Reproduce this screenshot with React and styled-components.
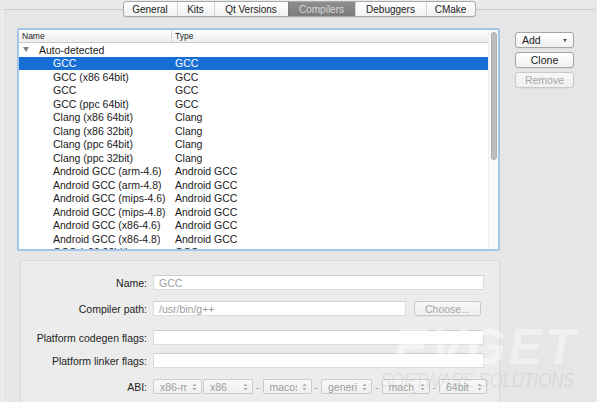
import React from "react";
import styled, { createGlobalStyle, css } from "styled-components";

const GlobalStyle = createGlobalStyle`
  html, body {
    margin: 0;
    padding: 0;
    background: #e9e9e9;
  }
  body {
    font-family: "Liberation Sans", Arial, sans-serif;
    font-size: 10.5px;
    color: #222;
  }
`;

const Window = styled.div`
  position: relative;
  width: 597px;
  height: 402px;
  overflow: hidden;
  background: #e9e9e9;
`;

const TabStrip = styled.div`
  position: relative;
  z-index: 2;
  display: flex;
  justify-content: center;
  padding-top: 1px;
  padding-left: 1px;
`;

const Tabs = styled.div`
  display: flex;
  height: 14px;
  border: 1px solid #a9a9a9;
  border-radius: 3px;
  background: linear-gradient(#ffffff, #f1f1f1);
  overflow: hidden;
  box-shadow: 0 1px 0 rgba(0, 0, 0, 0.06);
`;

const Tab = styled.div`
  display: flex;
  align-items: center;
  justify-content: center;
  width: ${(p) => p.$w}px;
  font-size: 10px;
  color: #1c1c1c;
  border-left: 1px solid #d2d2d2;
  &:first-child {
    border-left: none;
  }
  ${(p) =>
    p.$active &&
    css`
      background: linear-gradient(#8d8d8d, #7c7c7c);
      color: #d8d8d8;
      border-left-color: #7a7a7a;
    `}
`;

const Pane = styled.div`
  margin: -8px 2px 0 2px;
  height: 400px;
  border-top: 1px solid #cdcdcd;
  border-left: 1px solid #f3f3f3;
  background: #e6e6e6;
  padding: 18px 0 0 14px;
  box-sizing: border-box;
`;

const Content = styled.div`
  display: flex;
  gap: 15px;
`;

const LeftColumn = styled.div`
  display: flex;
  flex-direction: column;
  width: 483px;
`;

const ListFrame = styled.div`
  display: flex;
  height: 223px;
  border: 2px solid #a6c4ea;
  border-radius: 2px;
  background: #fff;
  box-sizing: border-box;
  overflow: hidden;
`;

const Table = styled.div`
  flex: 1;
  display: flex;
  flex-direction: column;
  overflow: hidden;
`;

const HeaderRow = styled.div`
  display: flex;
  height: 13px;
  flex-shrink: 0;
  background: linear-gradient(#ffffff, #ededed);
  border-bottom: 1px solid #c9c9c9;
  box-sizing: border-box;
`;

const HeadCell = styled.div`
  display: flex;
  align-items: center;
  width: ${(p) => (p.$w ? `${p.$w}px` : "auto")};
  flex: ${(p) => (p.$w ? "none" : 1)};
  padding-left: 3px;
  font-size: 8.5px;
  color: #222;
  box-sizing: border-box;
  & + & {
    border-left: 1px solid #d0d0d0;
  }
`;

const Row = styled.div`
  display: flex;
  height: 13.5px;
  flex-shrink: 0;
  align-items: center;
  color: ${(p) => (p.$selected ? "#fff" : "#1a1a1a")};
  background: ${(p) => (p.$selected ? "#176fd5" : "transparent")};
`;

const NameCell = styled.div`
  width: 152px;
  display: flex;
  align-items: center;
  padding-left: ${(p) => p.$indent}px;
  box-sizing: border-box;
  white-space: nowrap;
`;

const TypeCell = styled.div`
  padding-left: 4px;
  white-space: nowrap;
`;

const Arrow = styled.span`
  display: inline-block;
  width: 0;
  height: 0;
  border-left: 3px solid transparent;
  border-right: 3px solid transparent;
  border-top: 5px solid #808080;
  margin-right: 10px;
`;

const Scrollbar = styled.div`
  width: 10px;
  flex-shrink: 0;
  background: #fafafa;
  border-left: 1px solid #eeeeee;
  padding: 2px 0 0 2px;
  box-sizing: border-box;
`;

const Thumb = styled.div`
  width: 6px;
  height: 128px;
  border-radius: 3px;
  background: #bdbdbd;
  border: 1px solid #adadad;
  box-sizing: border-box;
`;

const DetailsBox = styled.div`
  margin: 9px 0 0 3px;
  width: 480px;
  height: 150px;
  background: #ececec;
  border: 1px solid #d8d8d8;
  border-radius: 3px;
  box-sizing: border-box;
  padding: 14px 15px 0 0;
`;

const FormRow = styled.div`
  display: flex;
  align-items: center;
  margin-top: ${(p) => p.$top || 0}px;
  height: 15px;
`;

const Label = styled.div`
  width: 126px;
  flex-shrink: 0;
  text-align: right;
  color: #1e1e1e;
  margin-right: 6px;
  white-space: nowrap;
`;

const TextField = styled.div`
  width: ${(p) => (p.$w ? `${p.$w}px` : "auto")};
  flex: ${(p) => (p.$w ? "none" : 1)};
  height: 15px;
  background: #fff;
  border: 1px solid #dcdcdc;
  border-top-color: #cfcfcf;
  box-sizing: border-box;
  padding-left: 5px;
  display: flex;
  align-items: center;
  color: #9d9d9d;
`;

const PlainButton = styled.div`
  display: flex;
  align-items: center;
  justify-content: ${(p) => (p.$left ? "space-between" : "center")};
  height: ${(p) => p.$h || 16}px;
  width: ${(p) => (p.$w ? `${p.$w}px` : "auto")};
  padding: 0 6px;
  box-sizing: border-box;
  border: 1px solid ${(p) => (p.$disabled ? "#c9c9c9" : "#a4a4a4")};
  border-radius: 3px;
  background: ${(p) =>
    p.$disabled ? "linear-gradient(#f7f7f7, #efefef)" : "linear-gradient(#ffffff, #f0f0f0)"};
  color: ${(p) => (p.$disabled ? "#a6a6a6" : "#1c1c1c")};
  margin-left: ${(p) => p.$ml || 0}px;
  box-shadow: 0 1px 0 rgba(0, 0, 0, 0.04);
`;

const ButtonColumn = styled.div`
  display: flex;
  flex-direction: column;
  gap: 4px;
  width: 59px;
  padding-top: 4px;
`;

const DropCaret = styled.span`
  width: 0;
  height: 0;
  border-left: 2.5px solid transparent;
  border-right: 2.5px solid transparent;
  border-top: 3.5px solid #555;
`;

const AbiRow = styled.div`
  display: flex;
  align-items: center;
  gap: 1px;
`;

const Combo = styled.div`
  position: relative;
  display: flex;
  align-items: center;
  width: ${(p) => p.$w}px;
  height: 15px;
  box-sizing: border-box;
  border: 1px solid #cbcbcb;
  border-radius: 2px;
  background: linear-gradient(#f8f8f8, #efefef);
  color: #9e9e9e;
  padding: 0 14px 0 6px;
`;

const ComboText = styled.span`
  overflow: hidden;
  white-space: nowrap;
  display: block;
  width: 100%;
`;

const ComboArrows = styled.svg`
  position: absolute;
  right: 4px;
  top: 3px;
`;

const Dash = styled.span`
  color: #9e9e9e;
  padding: 0 2px;
`;

const Watermark = styled.div`
  position: absolute;
  left: 394px;
  top: 322px;
  pointer-events: none;
  z-index: 5;
`;

const WatermarkBig = styled.div`
  font-family: "Liberation Sans", Arial, sans-serif;
  font-weight: 900;
  font-style: italic;
  font-size: 50px;
  line-height: 50px;
  letter-spacing: 3px;
  color: rgba(255, 255, 255, 0.42);
`;

const WatermarkSmall = styled.div`
  margin-top: -4px;
  margin-left: -14px;
  font-style: italic;
  font-size: 21px;
  letter-spacing: -0.5px;
  transform: scaleX(0.82);
  transform-origin: left;
  color: rgba(140, 140, 140, 0.16);
  white-space: nowrap;
`;

const tabs = [
  ["General", 53],
  ["Kits", 36],
  ["Qt Versions", 73],
  ["Compilers", 66],
  ["Debuggers", 70],
  ["CMake", 48],
];

const compilers = [
  ["GCC", "GCC"],
  ["GCC (x86 64bit)", "GCC"],
  ["GCC", "GCC"],
  ["GCC (ppc 64bit)", "GCC"],
  ["Clang (x86 64bit)", "Clang"],
  ["Clang (x86 32bit)", "Clang"],
  ["Clang (ppc 64bit)", "Clang"],
  ["Clang (ppc 32bit)", "Clang"],
  ["Android GCC (arm-4.6)", "Android GCC"],
  ["Android GCC (arm-4.8)", "Android GCC"],
  ["Android GCC (mips-4.6)", "Android GCC"],
  ["Android GCC (mips-4.8)", "Android GCC"],
  ["Android GCC (x86-4.6)", "Android GCC"],
  ["Android GCC (x86-4.8)", "Android GCC"],
  ["GCC (x86 32bit)", "GCC"],
];

const abi = [
  ["x86-macos-generic-mach_o-64bit", 49],
  ["x86", 50],
  ["macos", 49],
  ["generic", 51],
  ["mach_o", 48],
  ["64bit", 48],
];

const UpDown = () => (
  <ComboArrows width="5" height="8" viewBox="0 0 5 8">
    <path d="M0.5 3 L2.5 0.8 L4.5 3 Z" fill="#a8a8a8" />
    <path d="M0.5 5 L2.5 7.2 L4.5 5 Z" fill="#a8a8a8" />
  </ComboArrows>
);

const App = () => {
  return (
    <Window>
      <GlobalStyle />
      <TabStrip>
        <Tabs>
          {tabs.map(([t, w]) => (
            <Tab key={t} $w={w} $active={t === "Compilers"}>
              {t}
            </Tab>
          ))}
        </Tabs>
      </TabStrip>
      <Pane>
        <Content>
          <LeftColumn>
            <ListFrame>
              <Table>
                <HeaderRow>
                  <HeadCell $w={152}>Name</HeadCell>
                  <HeadCell>Type</HeadCell>
                </HeaderRow>
                <Row>
                  <NameCell $indent={4}>
                    <Arrow />
                    Auto-detected
                  </NameCell>
                </Row>
                {compilers.map(([name, type], i) => (
                  <Row key={i} $selected={i === 0}>
                    <NameCell $indent={34}>{name}</NameCell>
                    <TypeCell>{type}</TypeCell>
                  </Row>
                ))}
              </Table>
              <Scrollbar>
                <Thumb />
              </Scrollbar>
            </ListFrame>
            <DetailsBox>
              <FormRow>
                <Label>Name:</Label>
                <TextField>GCC</TextField>
              </FormRow>
              <FormRow $top={11}>
                <Label>Compiler path:</Label>
                <TextField $w={253}>/usr/bin/g++</TextField>
                <PlainButton $disabled $h={15} $w={67} $ml={8}>
                  Choose...
                </PlainButton>
              </FormRow>
              <FormRow $top={14}>
                <Label>Platform codegen flags:</Label>
                <TextField />
              </FormRow>
              <FormRow $top={8}>
                <Label>Platform linker flags:</Label>
                <TextField />
              </FormRow>
              <FormRow $top={11}>
                <Label>ABI:</Label>
                <AbiRow>
                  {abi.map(([v, w], i) => (
                    <React.Fragment key={v}>
                      {i > 1 && <Dash>-</Dash>}
                      <Combo $w={w}>
                        <ComboText>{v}</ComboText>
                        <UpDown />
                      </Combo>
                    </React.Fragment>
                  ))}
                </AbiRow>
              </FormRow>
            </DetailsBox>
          </LeftColumn>
          <ButtonColumn>
            <PlainButton $left>
              Add
              <DropCaret />
            </PlainButton>
            <PlainButton>Clone</PlainButton>
            <PlainButton $disabled>Remove</PlainButton>
          </ButtonColumn>
        </Content>
      </Pane>
      <Watermark>
        <WatermarkBig>EVGET</WatermarkBig>
        <WatermarkSmall>SOFTWARE SOLUTIONS</WatermarkSmall>
      </Watermark>
    </Window>
  );
};

export default App;
